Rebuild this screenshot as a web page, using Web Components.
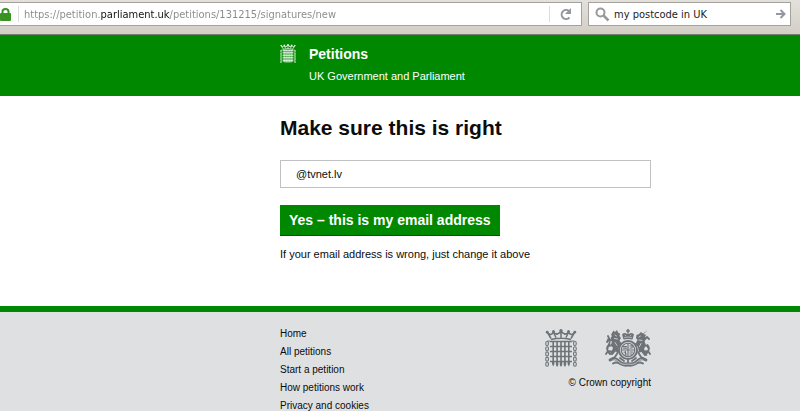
<!DOCTYPE html>
<html lang="en">
<head>
<meta charset="utf-8">
<meta name="viewport" content="width=device-width, initial-scale=1">
<title>Make sure this is right - Petitions</title>
<style>
  body { margin: 0; background: #fff; color: #0b0c0c; font-family: "Liberation Sans", Arial, sans-serif; --green: #008800; --start: 35%; --end: 149px; }
</style>
</head>
<body>
<petition-page></petition-page>

<template id="portcullis-mark">
  <style>
    :host { display: block; }
    svg { display: block; width: 100%; height: auto; }
  </style>
  <svg viewBox="0 0 32 38" fill="none" stroke="currentColor" aria-hidden="true">
    <path stroke-width="1.5" d="M6 10.5Q16 8 26 10.500M6 9.500L2.500 3.500Q6 7.500 8.500 3.200Q11.500 7 16 2.500Q20.500 7 23.500 3.200Q26 7.500 29.500 3.500L26 9.500M8.500 3.500L11 8.500M23.500 3.500L21 8.500M16 2.500V9"/>
    <g fill="currentColor" stroke="none">
      <circle cx="2.200" cy="3.200" r="1.400"/><circle cx="8.500" cy="2.500" r="1.500"/><circle cx="16" cy="1.800" r="1.700"/><circle cx="23.500" cy="2.500" r="1.500"/><circle cx="29.800" cy="3.200" r="1.400"/>
      <circle cx="12" cy="5" r="1"/><circle cx="20" cy="5" r="1"/>
      <path d="M7 33h2.400v2l-1.200 2.500L7 35zM10.900 33h2.400v3l-1.200 2-1.200-2zM14.800 33h2.400v3L16 38l-1.200-2zM18.700 33h2.400v3l-1.200 2-1.200-2zM22.600 33H25v2l-1.200 2.500L22.600 35z"/>
    </g>
    <path stroke-width="1.600" d="M8.200 12V34M12.100 12V34M16 12V34M19.900 12V34M23.800 12V34"/>
    <path stroke-width="1.700" d="M5 12.500H27M5 17.500H27M5 22.500H27M5 27.500H27M5 32.500H27"/>
    <g stroke-width="1.100">
      <path d="M5 12H2.500M27 12H29.500"/>
      <rect x=".8" y="12.500" width="2.600" height="4" rx="1.200"/><rect x=".8" y="17.700" width="2.600" height="4" rx="1.200"/><rect x=".8" y="22.900" width="2.600" height="4" rx="1.200"/><rect x=".8" y="28.100" width="2.600" height="4" rx="1.200"/><rect x=".8" y="33.300" width="2.600" height="4" rx="1.200"/>
      <rect x="28.600" y="12.500" width="2.600" height="4" rx="1.200"/><rect x="28.600" y="17.700" width="2.600" height="4" rx="1.200"/><rect x="28.600" y="22.900" width="2.600" height="4" rx="1.200"/><rect x="28.600" y="28.100" width="2.600" height="4" rx="1.200"/><rect x="28.600" y="33.300" width="2.600" height="4" rx="1.200"/>
    </g>
  </svg>
</template>

<template id="royal-arms">
  <style>
    :host { display: block; }
    svg { display: block; width: 100%; height: auto; }
  </style>
  <svg viewBox="0 0 46 38" fill="none" stroke="currentColor" stroke-linecap="round" stroke-linejoin="round" aria-hidden="true">
    <path fill="currentColor" stroke="none" d="M18.500 10.500L17 5.500q2.500-2.500 5-.5l1-1 1 1q2.500-2 5 .5L27.500 10.500q-4.500-1.200-9 0zM22.200 0h1.600v1.200H25v1.300h-1.200V4h-1.600V2.500H21V1.200h1.200z"/>
    <path stroke="#dee0e2" stroke-width=".6" d="M19.500 8.500Q23 7.500 26.500 8.500M20 6l1 1M26 6l-1 1"/>
    <circle cx="23" cy="21" r="9" stroke-width="2"/>
    <circle cx="23" cy="21" r="6.700" stroke-width="1.100"/>
    <path stroke-width="1.200" d="M23 14.500V27.500M16.500 21H29.500M18.500 17.500H21.500M18.500 19.200H21.500M25 17Q28 16 27 19H25M19 23q2 0 2 3M20.500 22.500v3M25 23H27.500M25 25H27"/>
    <path fill="currentColor" stroke="none" d="M7 4l1.500-2.500L10 3l2-2 1 2.500 2 1-.5 2.500 1.500 2-1.500 2.500 2 3-2.500 3-1 6-2.500-1-3 3.500-3-.5 2-3 1.500-3.500-2-3 1-4-1.500-3 1.500-2L6 6z"/>
    <path fill="currentColor" stroke="none" d="M43 1l-5 3.500-2-1.500-2 2-2.500 1-.5 3 1.500 2-2 4 2.500 3 1 5.500 2.500-.5 3 4 3-.5-2-3.500-1.500-3 2-4-1.500-3.500 1.500-3-1-2.500 1.500-1L38.500 5z"/>
    <path stroke-width="1.800" d="M8 12L3.500 10 2 13M8 16L3 17 2.500 19.500M8 23L3 22 1 25M13 23l-3 5-4 2M5 25Q0 20 3.500 16Q6 13 3 7M11 13l4 2M38 12l4-4 2 2M38 16l4 1 1.500 2M38 23l5-1 2 3M33 23l3 5 4 2M41 25Q46 20 42.500 16M35 13l-4 2"/>
    <path stroke="#dee0e2" stroke-width=".8" d="M10 6l1.500 1M9.500 9.500l3 .5M10 13.500l2 3M35.500 7l-1.500 1M34 11l3 .5M36 14.500l-1.500 3"/>
    <path stroke-width="2.800" d="M5 31Q10 28 14 32Q17 36 23 34.500Q29 36 32 32Q36 28 41 31"/>
    <path stroke-width="1.800" d="M8 34.500Q12 32 16 35.500Q20 37.500 23 36.500Q26 37.500 30 35.500Q34 32 38 34.500M15 29l4 3M31 29l-4 3M23 31v3"/>
    <path stroke="#dee0e2" stroke-width=".7" d="M8 31Q11 29.500 13.500 32.500Q17 36.500 23 35Q29 36.500 32.500 32.500Q35 29.500 38 31"/>
  </svg>
</template>

<template id="browser-bar">
  <style>
    :host { display: grid; grid-template-columns: minmax(0, 582fr) minmax(0, 203fr); gap: 6px; padding: 2px 9px 8px 0; background: linear-gradient(#e4e1dc, #d3cec6); border-bottom: 1px solid #77806f; box-sizing: border-box; height: 35px; font: 11px "DejaVu Sans Condensed", Tahoma, sans-serif; }
    div { display: flex; align-items: center; box-sizing: border-box; background: #fff; border: 1px solid #a5a29e; height: 24px; min-width: 0; }
    .address { border-left: 0; }
    .find { padding-left: 6px; }
    input { flex: 1; min-width: 0; height: 20px; border: 0; padding: 0; outline: 0; background: transparent; font: inherit; color: #222; }
    .url { color: #888; background: linear-gradient(90deg, #888 76px, #111 76px 146px, #888 146px); -webkit-background-clip: text; background-clip: text; -webkit-text-fill-color: transparent; }
    button { display: grid; place-items: center; border: 0; padding: 0; background: none; color: #9297a0; }
    .reload { width: 32px; height: 16px; border-left: 1px solid #ddd; }
    .go { width: 18px; height: 16px; }
    svg { display: block; fill: none; stroke: currentColor; }
    .lock { color: #399321; width: 18px; height: 16px; flex: none; border-right: 1px solid #ddd; margin-right: 5px; }
    .lens { color: #999; width: 15px; height: 15px; flex: none; margin-right: 4px; }
  </style>
  <div class="address">
    <svg class="lock" viewBox="0 0 18 16" aria-hidden="true"><path stroke-width="2" d="M2.500 8V5.500Q2.500 3 5.500 3T8.500 5.500V8"/><rect x="0" y="7" width="11" height="8" rx="1" fill="currentColor" stroke="none"/></svg>
    <input class="url" aria-label="Address" value="https://petition.parliament.uk/petitions/131215/signatures/new">
    <button class="reload" aria-label="Reload"><svg width="14" height="14" viewBox="0 0 14 14"><path stroke-width="2" d="M10.500 10.500A4.500 4.500 0 1 1 10 4"/><path fill="currentColor" stroke="none" d="M12 1v6H6z"/></svg></button>
  </div>
  <div class="find">
    <svg class="lens" viewBox="0 0 15 15" aria-hidden="true"><circle cx="5.500" cy="5.500" r="4" stroke-width="2"/><path stroke-width="2.500" d="M8.500 8.500L13.500 13.500"/></svg>
    <input aria-label="Search" value="my postcode in UK">
    <button class="go" aria-label="Go"><svg width="10" height="10" viewBox="0 0 10 10"><path stroke-width="2" d="M0 5H8M4.500 1L8.500 5L4.500 9"/></svg></button>
  </div>
</template>

<template id="site-header">
  <style>
    :host { display: grid; grid-template-columns: 16px 1fr; column-gap: 13px; padding: 9px var(--end) 12px var(--start); background: var(--green); color: #fff; }
    portcullis-mark { width: 16px; }
    a { color: inherit; text-decoration: none; font-weight: bold; font-size: 14px; line-height: 20px; }
    p { grid-column: 2; margin: 4px 0 0; font-size: 11px; line-height: 16px; }
  </style>
  <portcullis-mark></portcullis-mark>
  <a href="#">Petitions</a>
  <p><slot></slot></p>
</template>

<template id="email-form">
  <style>
    :host { display: block; padding: 18px var(--end) 43px var(--start); }
    h1 { margin: 0 0 18px; font-size: 21px; line-height: 28px; }
    input { display: block; box-sizing: border-box; width: 100%; height: 28px; margin: 0; padding: 0 15px; border: 1px solid #bfc1c3; color: #0b0c0c; font: 11px "Liberation Sans", Arial, sans-serif; outline: 0; }
    button { display: block; margin: 17px 0 9px; padding: 0 9px; border: 0; box-shadow: inset 0 -1px #005200; background: var(--green); color: #fff; font: bold 14px/31px "Liberation Sans", Arial, sans-serif; }
    p { margin: 0; font-size: 11px; line-height: 18px; }
  </style>
  <form>
    <h1 id="title">Make sure this is right</h1>
    <input type="text" aria-labelledby="title" value="@tvnet.lv">
    <button type="button">Yes – this is my email address</button>
    <p>If your email address is wrong, just change it above</p>
  </form>
</template>

<template id="site-footer">
  <style>
    :host { display: flex; flex: 1; justify-content: space-between; align-items: flex-start; padding: 13px var(--end) 0 var(--start); border-top: 6px solid var(--green); background: #dee0e2; font-size: 10px; }
    ul { list-style: none; margin: 0; padding: 0; }
    li { line-height: 18px; }
    a { color: inherit; text-decoration: none; }
    .crests { display: flex; justify-content: flex-end; gap: 28px; margin-top: 4px; color: #6d7377; }
    portcullis-mark { width: 32px; }
    royal-arms { width: 46px; }
    p { margin: 8px 0 0; line-height: 16px; text-align: right; }
  </style>
  <ul>
    <li><a href="#">Home</a></li>
    <li><a href="#">All petitions</a></li>
    <li><a href="#">Start a petition</a></li>
    <li><a href="#">How petitions work</a></li>
    <li><a href="#">Privacy and cookies</a></li>
  </ul>
  <div>
    <div class="crests"><portcullis-mark></portcullis-mark><royal-arms></royal-arms></div>
    <p>© Crown copyright</p>
  </div>
</template>

<template id="petition-page">
  <style>
    :host { display: flex; flex-direction: column; min-height: 100vh; }
  </style>
  <browser-bar></browser-bar>
  <site-header>UK Government and Parliament</site-header>
  <email-form></email-form>
  <site-footer></site-footer>
</template>

<script>
  class TemplateElement extends HTMLElement {
    constructor() {
      super();
      const template = document.getElementById(this.localName);
      this.attachShadow({ mode: "open" }).append(document.importNode(template.content, true));
    }
  }
  for (const name of ["portcullis-mark", "royal-arms", "browser-bar", "site-header", "email-form", "site-footer", "petition-page"]) {
    customElements.define(name, class extends TemplateElement {});
  }
</script>
</body>
</html>
